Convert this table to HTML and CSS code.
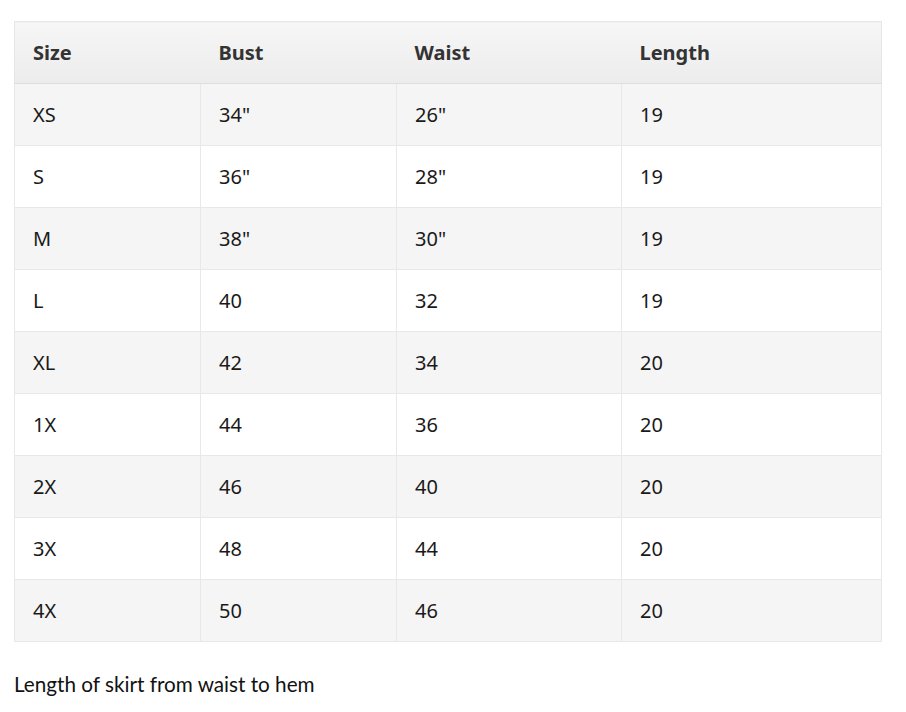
FILE: index.html
```html
<!DOCTYPE html>
<html>
<head>
<meta charset="utf-8">
<link rel="stylesheet" href="styles.css">
</head>
<body>
<div class="page">
  <table class="size-table">
    <colgroup>
      <col class="c1"><col class="c2"><col class="c3"><col class="c4">
    </colgroup>
    <thead>
      <tr><th>Size</th><th>Bust</th><th>Waist</th><th>Length</th></tr>
    </thead>
    <tbody>
      <tr><td>XS</td><td>34"</td><td>26"</td><td>19</td></tr>
      <tr><td>S</td><td>36"</td><td>28"</td><td>19</td></tr>
      <tr><td>M</td><td>38"</td><td>30"</td><td>19</td></tr>
      <tr><td>L</td><td>40</td><td>32</td><td>19</td></tr>
      <tr><td>XL</td><td>42</td><td>34</td><td>20</td></tr>
      <tr><td>1X</td><td>44</td><td>36</td><td>20</td></tr>
      <tr><td>2X</td><td>46</td><td>40</td><td>20</td></tr>
      <tr><td>3X</td><td>48</td><td>44</td><td>20</td></tr>
      <tr><td>4X</td><td>50</td><td>46</td><td>20</td></tr>
    </tbody>
  </table>
  <p class="note">Length of skirt from waist to hem</p>
</div>
</body>
</html>
```
FILE: styles.css
```css
html, body {
  margin: 0;
  padding: 0;
  background: #fff;
}
.page {
  padding: 21px 25px 0 14px;
}
.size-table {
  width: 867px;
  border-collapse: collapse;
  table-layout: fixed;
  font-family: "Noto Sans", "Open Sans", sans-serif;
  font-size: 20px;
  color: #1a1a1a;
  border: 1px solid #e6e6e6;
}
.c1 { width: 186px; }
.c2 { width: 196px; }
.c3 { width: 225px; }
.c4 { width: 260px; }
.size-table th {
  height: 61px;
  padding: 0 18px;
  text-align: left;
  font-weight: 700;
  color: #333;
  background: linear-gradient(#f6f6f6, #ececec);
  border-bottom: 1px solid #dedede;
}
.size-table td {
  height: 61px;
  padding: 0 18px;
  border: 1px solid #e8e8e8;
  line-height: 1;
}
.size-table tbody tr:nth-child(odd) td {
  background: #f5f5f5;
}
.size-table tbody tr:nth-child(even) td {
  background: #fff;
}
.note {
  margin: 30px 0 0 0;
  font-family: "Lato", "Noto Sans", sans-serif;
  font-size: 20.7px;
  color: #111;
}
```
